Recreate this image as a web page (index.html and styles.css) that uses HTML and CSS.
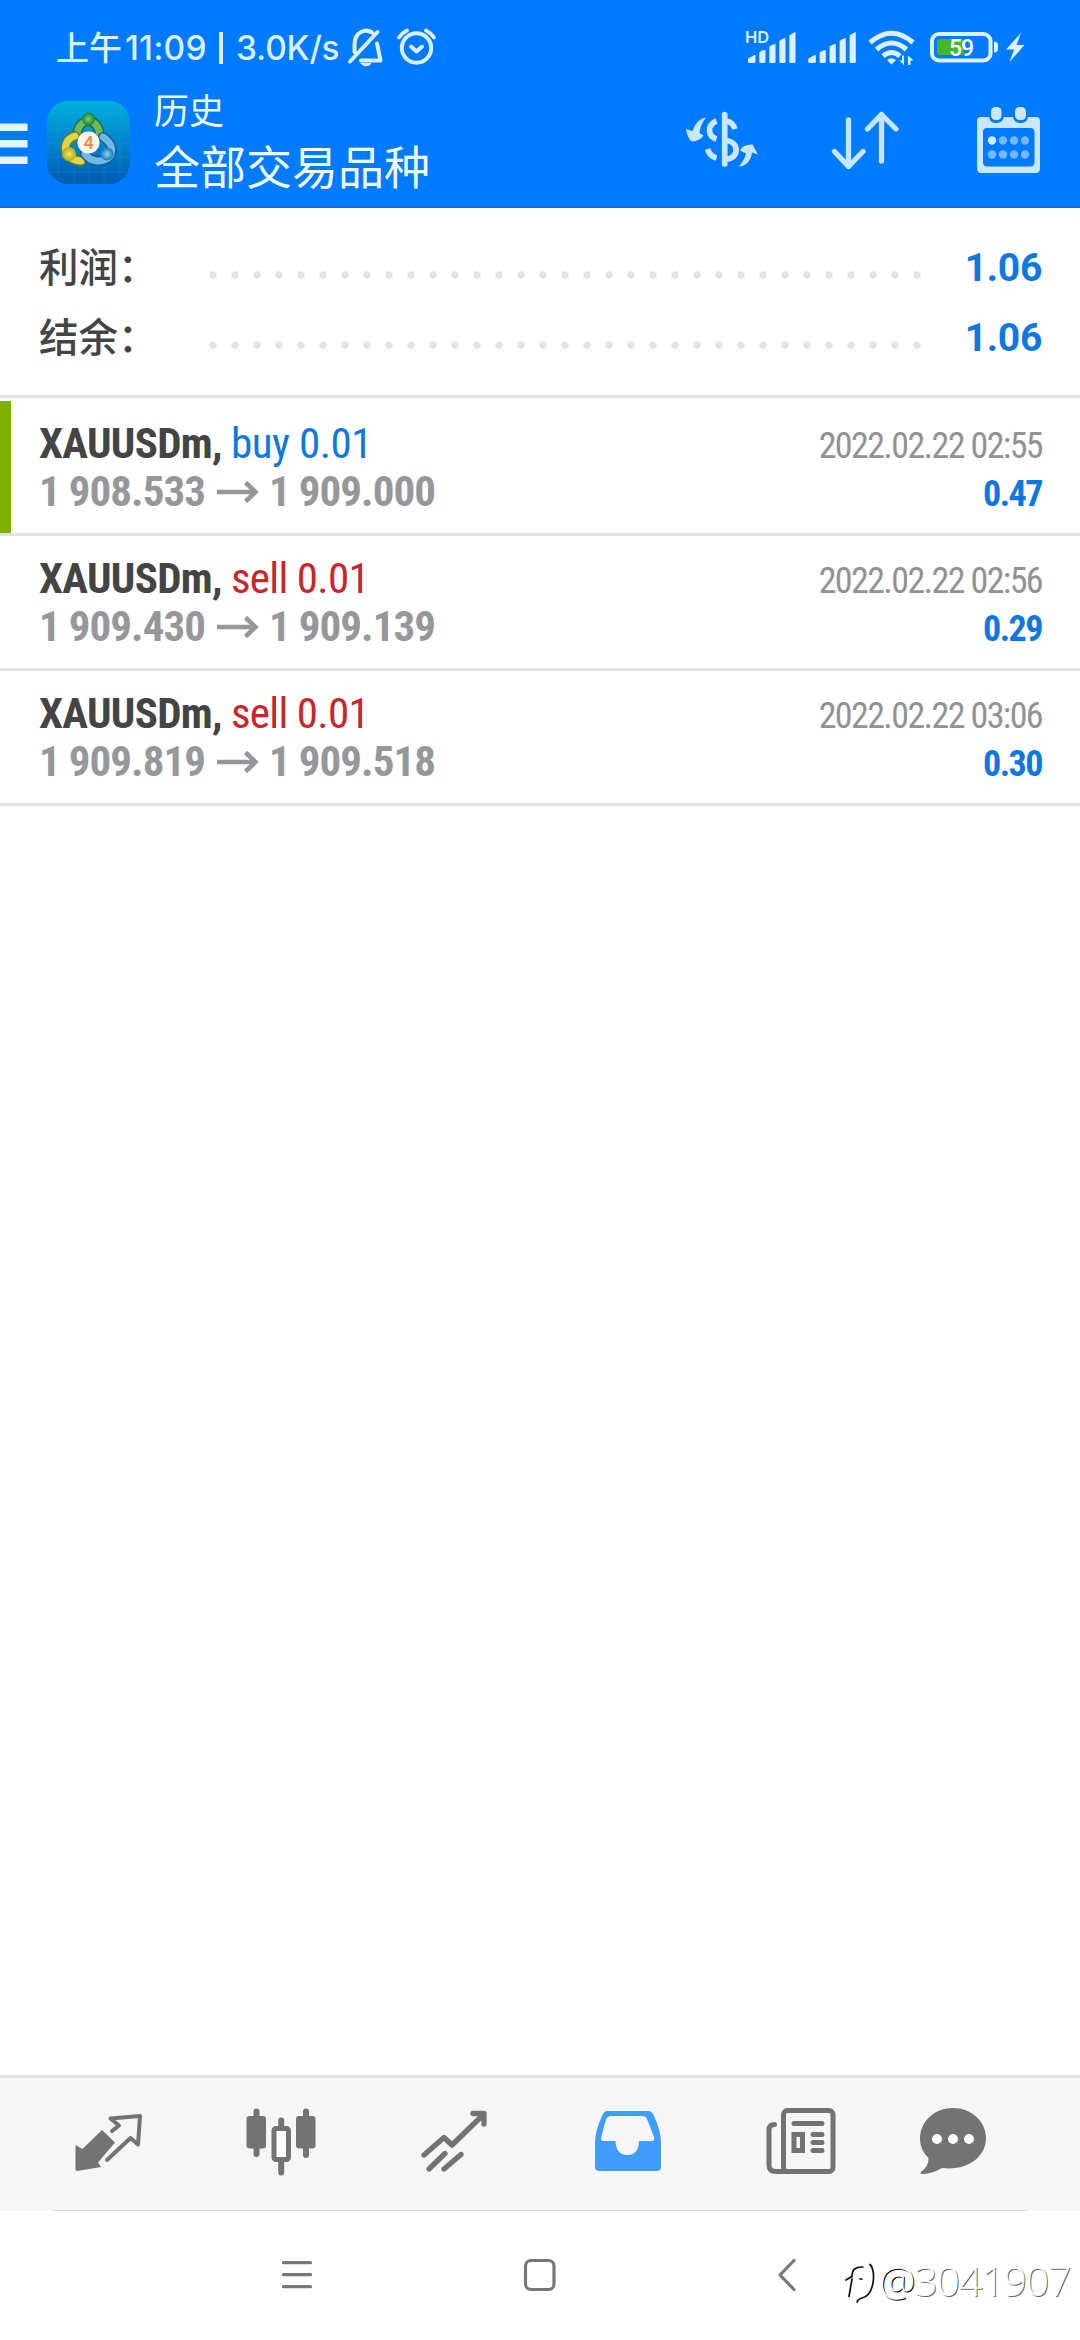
FILE: index.html
```html
<!DOCTYPE html>
<html lang="zh-CN">
<head>
<meta charset="utf-8">
<title>历史</title>
<link rel="stylesheet" href="styles.css">
</head>
<body>
<div class="screen">
  <header class="header">
    <div class="status">
      <div class="status-left">
        <span class="ampm">上午</span><span class="clock">11:09</span><span class="bar"></span><span class="speed">3.0K/s</span>
        <svg class="bell" viewBox="346 26 40 44" width="40" height="44" fill="none" stroke="#d9efff" stroke-width="4" stroke-linecap="round" stroke-linejoin="round">
          <path d="M377.500 32 350 61.500M354.500 52V45C354.500 31 366 28.500 372 32.500M377 43.500 380.500 60.500H361"/><path d="M361 63.500H371Q366 68.500 361 63.500" fill="#d9efff" stroke-width="1"/>
        </svg>
        <svg class="alarm" viewBox="395 26 44 42" width="44" height="42" fill="none" stroke="#d9efff" stroke-width="4" stroke-linecap="round" stroke-linejoin="round">
          <circle cx="416.500" cy="48" r="14.700"/><path d="M411 46.500 416.500 51.500 422 46.500"/><path d="M399 37.500Q402 33 407 30.500M434 37.500Q431 33 426 30.500" stroke-width="3.800"/>
        </svg>
      </div>
      <svg class="status-right" viewBox="744 26 284 42" width="284" height="42" fill="#dcf0ff">
        <text x="745" y="43" class="hd">HD</text>
        <path d="M748 62.500V58.500L754.500 55H755.500V62.500Q751 63.500 748 62.500ZM759.300 62.500V52.500Q762 50 765.500 50V62.500Q762 63.500 759.300 62.500ZM769.300 62.500V46.500Q772 44 775.500 44V62.500Q772 63.500 769.300 62.500ZM779.300 62.500V41Q782 38.500 785.500 38V62.500Q782 63.500 779.300 62.500ZM789.300 62.500V35.500Q792 33 795.500 32V62.500Q792 63.500 789.300 62.500Z"/>
        <path transform="translate(60.300)" d="M748 62.500V58.500L754.500 55H755.500V62.500Q751 63.500 748 62.500ZM759.300 62.500V52.500Q762 50 765.500 50V62.500Q762 63.500 759.300 62.500ZM769.300 62.500V46.500Q772 44 775.500 44V62.500Q772 63.500 769.300 62.500ZM779.300 62.500V41Q782 38.500 785.500 38V62.500Q782 63.500 779.300 62.500ZM789.300 62.500V35.500Q792 33 795.500 32V62.500Q792 63.500 789.300 62.500Z"/>
        <g fill="none" stroke="#dcf0ff" stroke-width="5"><path d="M870 42.500Q891.500 24 913 42.500M876.500 49.500Q891.500 36.500 906.500 49.500M883 56Q891.500 49 900 56"/></g>
        <path d="M887 60Q891.500 56.500 896 60L891.500 64.500ZM904 55.500V65L899.500 60.500H902V55.500ZM908 65V55.500L913.500 60.500H910.500V65Z"/>
        <rect x="937" y="39" width="27" height="16" rx="3" fill="#43b82c"/>
        <rect x="932" y="34" width="58.500" height="26.500" rx="7" fill="none" stroke="#dcf0ff" stroke-width="4"/>
        <path d="M994 41.500Q998 42 998 44.500V49.500Q998 52 994 52.500ZM1021 33 1006 49.500H1014L1009.500 62 1024.500 45H1016.500Z"/>
        <text x="949" y="55.500" class="level">59</text>
      </svg>
    </div>
    <div class="toolbar">
      <svg class="menu" viewBox="0 120 28 48" width="28" height="48" fill="#e2f5ff"><path d="M0 123.500H27.500V131H0ZM0 140H27.500V147.500H0ZM0 156.500H27.500V164H0Z"/></svg>
      <svg class="logo" viewBox="0 0 83 83" width="83" height="83">
        <defs>
          <linearGradient id="sky" x2="0" y2="1"><stop stop-color="#00b1dd"/><stop offset=".5" stop-color="#0084ce"/><stop offset="1" stop-color="#005ab2"/></linearGradient>
          <radialGradient id="green"><stop stop-color="#83cf72"/><stop offset="1" stop-color="#19813a"/></radialGradient>
          <radialGradient id="gold"><stop stop-color="#f6e665"/><stop offset="1" stop-color="#b5a719"/></radialGradient>
          <radialGradient id="blue"><stop stop-color="#8bd2f4"/><stop offset="1" stop-color="#1979bd"/></radialGradient>
        </defs>
        <rect width="83" height="83" rx="21" fill="url(#sky)"/>
        <path d="M11 4V79M27 1V82M42 1V82M57 1V82M73 4V79M4 12H79M1 27H82M1 42H82M1 56H82M3 71H80" stroke="#40bee0" stroke-opacity=".15" fill="none"/>
        <g fill="none" stroke-linecap="round">
          <path d="M30 34C31 16 51 15 53 34" stroke="#1d6f45" stroke-width="10"/><path d="M30 34C31 16 51 15 53 34" stroke="#70b85c" stroke-width="7"/>
          <path d="M28 35C14 39 15 59 34 60" stroke="#707b22" stroke-width="10"/><path d="M28 35C14 39 15 59 34 60" stroke="#ded64b" stroke-width="7"/>
          <path d="M56 36C71 46 65 61 50 60Q42 59 38 53" stroke="#145c98" stroke-width="10"/><path d="M56 36C71 46 65 61 50 60Q42 59 38 53" stroke="#70b9e5" stroke-width="7"/>
        </g>
        <circle cx="41.500" cy="18" r="6.500" fill="url(#green)"/><circle cx="22" cy="53" r="7" fill="url(#gold)"/><circle cx="60" cy="53" r="6.500" fill="url(#blue)"/>
        <circle cx="41.500" cy="41.500" r="11" fill="#fff4ec"/><text x="41.500" y="48" class="four">4</text>
      </svg>
      <div class="titles"><div class="title">历史</div><div class="subtitle">全部交易品种</div></div>
      <div class="actions">
        <svg viewBox="684 108 76 64" width="76" height="64" fill="#cbe6ff">
          <path d="M686 130 692.500 132C695 124.500 700 119.500 706 118.500Q700 126 699.500 134L703.500 136.500Q700 142 691.500 142.500 687 138 686 130ZM758 155.500 752.500 145.500Q743 145 740 151.500L746 154.500Q744 162 738.700 167.500C745.500 167.500 751 162 752 153.500Z"/>
          <g fill="none" stroke="#cbe6ff" stroke-width="5.700"><path d="M724.700 115.500V165" stroke-linecap="round"/><path d="M716.500 122Q709 125 709.500 132 710 138 716.500 140M707.500 150Q710 157.500 716.500 159M726 122Q733 123 735 130M726 141.500C740 143 739 160 726 160"/></g>
        </svg>
        <svg viewBox="828 108 74 66" width="74" height="66" fill="none" stroke="#c6e6ff" stroke-width="5.300" stroke-linecap="round" stroke-linejoin="round"><path d="M848.500 121V167M834.500 152.500 848.500 167.500 863 152.500M881.500 162V115.500M867.500 130 881.500 115.500 896 130"/></svg>
        <svg viewBox="974 104 70 74" width="70" height="74">
          <path fill="#cbe6ff" fill-rule="evenodd" d="M981 118H989Q990 124 996 124 1002.500 124 1004 118H1013Q1014 124 1020.500 124 1027 124 1028 118H1036Q1040 118 1040 122V169Q1040 174 1036 174H981Q977 174 977 169V122Q977 118 981 118ZM987 129Q983 129 983 133V163Q983 167.500 987 167.500H1030Q1034.500 167.500 1034.500 163V133Q1034.500 129 1030 129Z"/>
          <rect x="991" y="108" width="10.500" height="13" rx="4.500" fill="#cbe6ff"/><rect x="1015" y="108" width="11" height="13" rx="4.500" fill="#cbe6ff"/>
          <circle cx="992" cy="141.500" r="4.200" fill="#d0ecff"/><g fill="#74b8ff"><circle cx="1003" cy="141.500" r="4.200"/><circle cx="1014" cy="141.500" r="4.200"/><circle cx="1025" cy="141.500" r="4.200"/><circle cx="992" cy="155.500" r="4.200"/><circle cx="1003" cy="155.500" r="4.200"/><circle cx="1014" cy="155.500" r="4.200"/><circle cx="1025" cy="155.500" r="4.200"/></g>
        </svg>
      </div>
    </div>
  </header>

  <section class="summary">
    <div class="summary-row"><span class="label">利润：</span><span class="dots"></span><span class="total">1.06</span></div>
    <div class="summary-row"><span class="label">结余：</span><span class="dots"></span><span class="total">1.06</span></div>
  </section>

  <main class="deals">
    <article class="deal marked">
      <div class="line top"><div><b class="symbol">XAUUSDm,</b> <span class="buy">buy 0.01</span></div><time>2022.02.22 02:55</time></div>
      <div class="line bottom"><div class="prices"><span>1 908.533</span><svg viewBox="0 0 42 24" width="42" height="24"><path d="M0 12H39M28.500 2.500 38.500 12 28.500 21.500"/></svg><span>1 909.000</span></div><b class="profit">0.47</b></div>
    </article>
    <article class="deal">
      <div class="line top"><div><b class="symbol">XAUUSDm,</b> <span class="sell">sell 0.01</span></div><time>2022.02.22 02:56</time></div>
      <div class="line bottom"><div class="prices"><span>1 909.430</span><svg viewBox="0 0 42 24" width="42" height="24"><path d="M0 12H39M28.500 2.500 38.500 12 28.500 21.500"/></svg><span>1 909.139</span></div><b class="profit">0.29</b></div>
    </article>
    <article class="deal">
      <div class="line top"><div><b class="symbol">XAUUSDm,</b> <span class="sell">sell 0.01</span></div><time>2022.02.22 03:06</time></div>
      <div class="line bottom"><div class="prices"><span>1 909.819</span><svg viewBox="0 0 42 24" width="42" height="24"><path d="M0 12H39M28.500 2.500 38.500 12 28.500 21.500"/></svg><span>1 909.518</span></div><b class="profit">0.30</b></div>
    </article>
  </main>

  <nav class="tabs">
    <svg viewBox="72 2104 74 74" width="74" height="74"><path fill="#737373" d="M75.500 2145 82.500 2149 102 2130 115 2142.500 98 2162.500 101 2167 77 2171Q75.500 2171 75.500 2169Z"/><path fill="none" stroke="#737373" stroke-width="4" stroke-linecap="round" stroke-linejoin="round" d="M112 2131 119 2125.500 110.500 2118.500 140 2116 138 2144.500 130.500 2138 107 2160"/></svg>
    <svg viewBox="244 2104 74 74" width="74" height="74" fill="#737373"><rect x="246.500" y="2116" width="19.500" height="32.500" rx="3"/><rect x="296" y="2116" width="19.500" height="32.500" rx="3"/><path fill="none" stroke="#737373" stroke-width="6" stroke-linecap="round" d="M256.500 2111.500V2154M306 2111.500V2155M281.200 2120.500V2129M281.200 2161V2172.500"/><rect x="274" y="2128.500" width="14.500" height="31" rx="2" fill="#fff" stroke="#737373" stroke-width="5"/></svg>
    <svg viewBox="418 2104 74 74" width="74" height="74" fill="none" stroke="#737373" stroke-width="5.300" stroke-linecap="round" stroke-linejoin="round"><path d="M424 2155 444 2137.500 452 2145 484 2114M473 2113.500H484V2124"/><path d="M429 2169 445 2153.500M444 2169 461 2154.500"/></svg>
    <svg viewBox="590 2104 74 74" width="74" height="74"><path fill="#419cff" fill-rule="evenodd" d="M607 2111H648Q652 2111 654 2116 661 2131 661 2143V2167Q661 2171 656.500 2171H599.500Q595 2171 595 2167V2143Q595 2131 602 2116 604 2111 607 2111ZM611 2116Q607 2116 605.500 2121L601 2138Q600.500 2141 603.500 2141H615.500Q616 2155 627.500 2155 638.500 2155 639 2141H651Q655 2141 654 2137L647 2119Q646 2116 642 2116Z"/></svg>
    <svg viewBox="764 2104 74 74" width="74" height="74" fill="none" stroke="#737373" stroke-width="5"><rect x="783.500" y="2110.500" width="49.500" height="61" rx="4"/><path d="M774.500 2124.500Q769 2124.500 769 2130V2165Q769 2171.500 776 2171.500H787M794 2123.500H822M813 2134.500H822M813 2142.500H822M813 2150.500H822" stroke-linecap="round"/><rect x="794" y="2134.500" width="8.500" height="16"/></svg>
    <svg viewBox="916 2104 74 74" width="74" height="74"><path fill="#737373" d="M953 2108C971 2108 986 2121 986 2138 986 2158 966 2171 942 2168Q932 2174 921 2174 920 2174 921 2172 929 2166 928.500 2158 920 2150 920 2139C920 2121 935 2108 953 2108Z"/><g fill="#fff"><circle cx="937" cy="2139" r="5"/><circle cx="953" cy="2139" r="5"/><circle cx="969" cy="2139" r="5"/></g></svg>
  </nav>
  <footer class="system">
    <svg viewBox="280 2257 34 36" width="34" height="36"><path d="M283.500 2262.700H310.500M283.500 2274.700H310.500M283.500 2286.700H310.500"/></svg>
    <svg viewBox="522 2257 36 36" width="36" height="36"><rect x="525.500" y="2260.500" width="28.500" height="29" rx="5.500"/></svg>
    <svg viewBox="776 2257 22 36" width="22" height="36"><path d="M794 2260.500 780 2275 794 2289.500"/></svg>
    <div class="watermark"><svg viewBox="843 2260 36 46" width="36" height="46"><path d="M849 2298.500 852 2281M846 2282 851 2279M852 2279Q851 2268.500 863 2269M870 2266.500C876 2272 875 2297 862 2300Q858 2301 857 2304M860 2281H862"/></svg><span class="at">@</span><span>3041907</span></div>
  </footer>
</div>
</body>
</html>
```
FILE: styles.css
```css
* { box-sizing: border-box; }
body { margin: 0; background: #fff; font-family: Roboto, "Noto Sans CJK SC", sans-serif; }
svg { display: block; flex: none; }
.screen { width: 1080px; height: 2340px; display: flex; flex-direction: column; overflow: hidden; background: #fff; }

.header { height: 208px; background: #007aff; border-bottom: 2px solid #0c6edc; }
.status { height: 92px; padding: 26px 52px 0 56px; display: flex; justify-content: space-between; align-items: flex-start; color: #d9efff; }
.status-left { display: flex; height: 44px; align-items: flex-start; font: 500 33.500px/44px Inter, "Noto Sans CJK SC", sans-serif; white-space: nowrap; }
.ampm { width: 69px; font-size: 33px; }
.clock { width: 94px; letter-spacing: 0.200px; }
.bar { width: 4px; height: 32px; margin: 6px 13px 0 0; background: #d9efff; }
.speed { width: 110px; letter-spacing: -0.200px; }
.alarm { margin-left: 9px; }
.hd { font: 600 16.500px Inter, sans-serif; }
.level { font: 500 23px Roboto, sans-serif; fill: #fff; letter-spacing: -1px; }

.toolbar { height: 114px; display: flex; align-items: flex-start; }
.menu { margin-top: 28px; }
.logo { margin: 9px 0 0 19px; }
.four { font: 500 18px Roboto, sans-serif; fill: #f08a35; text-anchor: middle; }
.titles { margin: -2px 0 0 24px; color: #effcff; font-family: "Noto Sans CJK SC", sans-serif; white-space: nowrap; }
.title { height: 45px; font-size: 35px; line-height: 38px; }
.subtitle { font-size: 46px; line-height: 58px; }
.actions { flex: 1; display: flex; padding: 15px 0 0; margin-left: 254px; }
.actions svg:nth-child(2) { margin-left: 68px; }
.actions svg:nth-child(3) { margin: -4px 0 0 72px; }

.summary { height: 190px; padding: 24px 38px 0 39px; border-bottom: 3px solid #e3e3e3; }
.summary-row { height: 70px; display: flex; align-items: center; }
.label { width: 163px; margin-bottom: 5px; font: 500 39.500px/66px "Noto Sans CJK SC", sans-serif; color: #444; white-space: nowrap; }
.dots { width: 726px; height: 8px; margin: 15px 38px 0 0; background: radial-gradient(circle at 11px 4px, #e3e3e3 3.300px, transparent 4px) 0 0 / 22px 8px; }
.total { flex: 1; margin-top: 2px; text-align: right; font-size: 39px; font-weight: 700; color: #1177e0; letter-spacing: -0.300px; }

.deals { padding-top: 3px; }
.deal { height: 135px; padding: 17px 38px 0 39px; border-bottom: 3px solid #e3e3e3; font-stretch: 75%; letter-spacing: -0.700px; }
.marked { position: relative; }
.marked::before { content: ""; position: absolute; left: 0; top: 0; width: 11px; height: 132px; background: #80b000; }
.line { height: 48px; display: flex; justify-content: space-between; align-items: baseline; font-size: 43px; line-height: 50px; white-space: pre; }
.symbol { color: #444; }
.buy { color: #1177e0; letter-spacing: -0.450px; }
.sell { color: #c9252b; }
time { font-size: 36px; font-weight: 400; letter-spacing: -1.600px; color: #929292; }
.prices { display: flex; align-items: center; color: #96979a; font-weight: 700; letter-spacing: -0.950px; }
.prices span:first-child { width: 178px; }
.prices svg { margin: 2px 10px 0 0; fill: none; stroke: #96979a; stroke-width: 4.500; }
.profit { font-size: 36px; color: #1177e0; letter-spacing: -1.500px; }

.tabs { margin-top: auto; height: 136px; padding: 26px 90px 0 72px; display: grid; grid-template-columns: 172px 174px 172px 174px 152px 74px; background: #f6f6f6; border-top: 3px solid #e1e1e1; }
.system { position: relative; height: 129px; padding: 46px 10px 0 280px; display: flex; align-items: flex-start; }
.system::before { content: ""; position: absolute; left: 53px; right: 53px; top: -1px; height: 1px; background: #ddd; }
.system > svg { fill: none; stroke: #777; stroke-width: 3.200; stroke-linecap: round; stroke-linejoin: round; }
.system > svg:nth-child(2) { margin-left: 208px; }
.system > svg:nth-child(3) { margin-left: 218px; }
.watermark { margin: 1px 0 0 45px; display: flex; font: 300 41px/44px "Open Sans", sans-serif; color: #fff; text-shadow: 1px 1px 0 #666; white-space: nowrap; }
.watermark svg { fill: none; stroke: #111; stroke-width: 1.700; stroke-linecap: round; }
.watermark span { letter-spacing: -1.100px; }
.watermark .at { text-shadow: 1px 1px 0 #000; }
```
